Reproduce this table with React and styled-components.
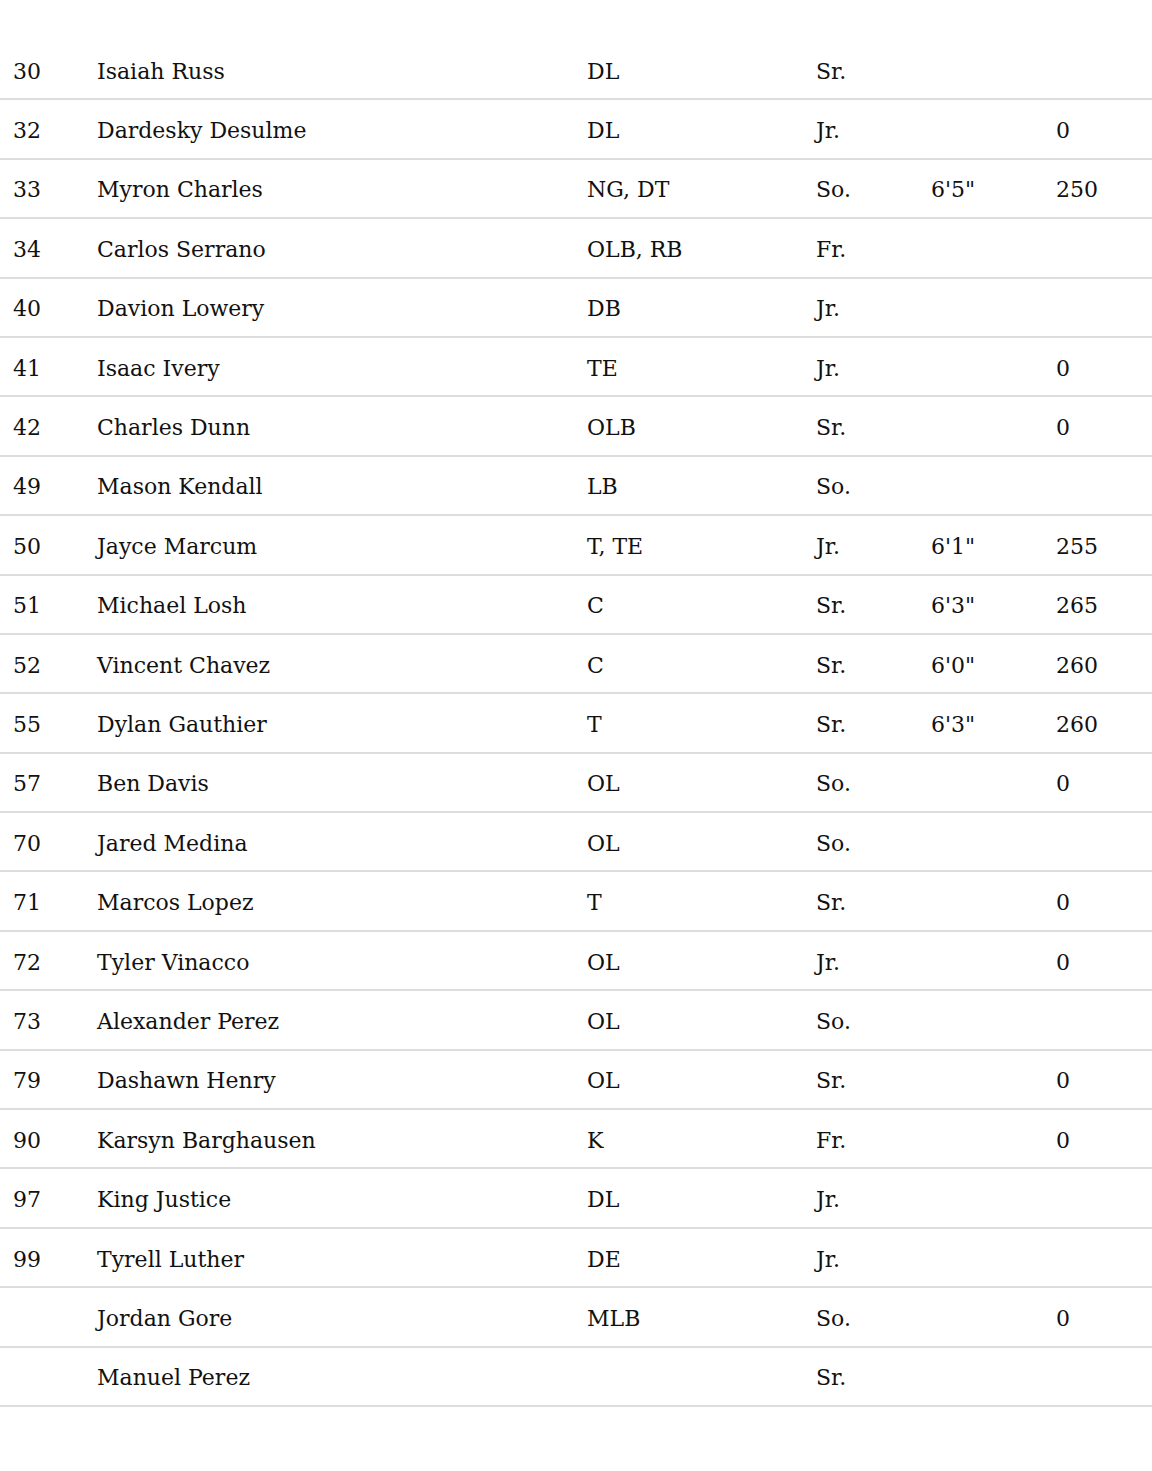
import styled, { createGlobalStyle } from "styled-components";

const GlobalStyle = createGlobalStyle`
  body {
    margin: 0;
    background: #ffffff;
    font-family: "DejaVu Serif", "Liberation Serif", serif;
    color: #111111;
  }
`;

const players = [
  ["30", "Isaiah Russ", "DL", "Sr.", "", ""],
  ["32", "Dardesky Desulme", "DL", "Jr.", "", "0"],
  ["33", "Myron Charles", "NG, DT", "So.", "6'5\"", "250"],
  ["34", "Carlos Serrano", "OLB, RB", "Fr.", "", ""],
  ["40", "Davion Lowery", "DB", "Jr.", "", ""],
  ["41", "Isaac Ivery", "TE", "Jr.", "", "0"],
  ["42", "Charles Dunn", "OLB", "Sr.", "", "0"],
  ["49", "Mason Kendall", "LB", "So.", "", ""],
  ["50", "Jayce Marcum", "T, TE", "Jr.", "6'1\"", "255"],
  ["51", "Michael Losh", "C", "Sr.", "6'3\"", "265"],
  ["52", "Vincent Chavez", "C", "Sr.", "6'0\"", "260"],
  ["55", "Dylan Gauthier", "T", "Sr.", "6'3\"", "260"],
  ["57", "Ben Davis", "OL", "So.", "", "0"],
  ["70", "Jared Medina", "OL", "So.", "", ""],
  ["71", "Marcos Lopez", "T", "Sr.", "", "0"],
  ["72", "Tyler Vinacco", "OL", "Jr.", "", "0"],
  ["73", "Alexander Perez", "OL", "So.", "", ""],
  ["79", "Dashawn Henry", "OL", "Sr.", "", "0"],
  ["90", "Karsyn Barghausen", "K", "Fr.", "", "0"],
  ["97", "King Justice", "DL", "Jr.", "", ""],
  ["99", "Tyrell Luther", "DE", "Jr.", "", ""],
  ["", "Jordan Gore", "MLB", "So.", "", "0"],
  ["", "Manuel Perez", "", "Sr.", "", ""],
];

function App() {
  return (
    <>
      <GlobalStyle />
      <Roster>
        {players.map((p, i) => (
          <Row key={i}>
            {p.map((v, j) => (
              <Cell key={j}>{v}</Cell>
            ))}
          </Row>
        ))}
      </Roster>
    </>
  );
}

const Roster = styled.div`
  padding-top: 41px;
  padding-bottom: 64px;
`;

const Row = styled.div`
  display: grid;
  grid-template-columns: 84px 490px 229px 115px 125px 1fr;
  align-items: center;
  height: 57.4px;
  padding-left: 13px;
  border-bottom: 2px solid #dddddd;
`;

const Cell = styled.div`
  font-size: 22px;
  line-height: 1;
  padding-top: 4px;
  white-space: nowrap;
`;

export default App;
